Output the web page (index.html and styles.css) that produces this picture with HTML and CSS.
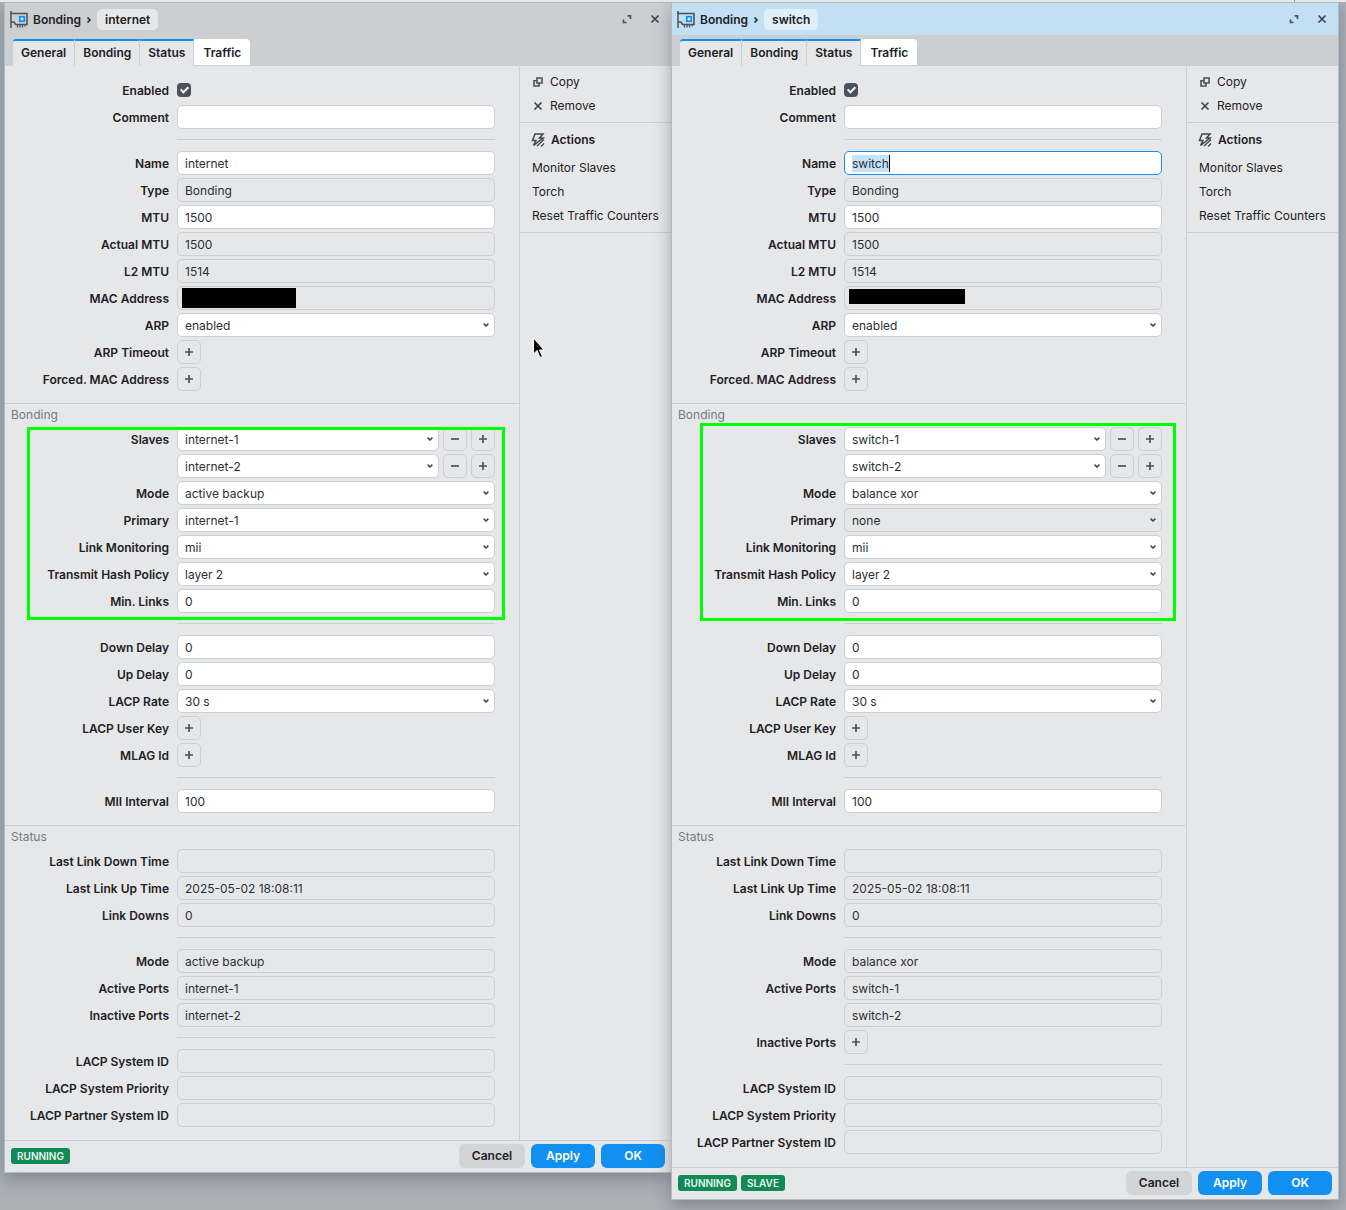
FILE: index.html
```html
<html lang="en">
<head>
  <meta charset="UTF-8">
  <meta name="viewport" content="width=device-width, initial-scale=1.0">
  <title>Bonding interfaces</title>
  <link rel="stylesheet" href="styles.css">
</head>
<body>
  <svg class="sprite" aria-hidden="true">
    <symbol id="icon-nic" viewBox="0 0 20 18">
      <path d="M1 1v17" stroke="#4a525c" stroke-width="1.5" fill="none"/>
      <path d="M0 3.500h17v11H5.500L4 12H1" stroke="#4a525c" stroke-width="1.6" fill="none"/>
      <path d="M7.500 14.500v3M10 14.500v3M12.500 14.500v3M15 14.500v2" stroke="#4a525c" stroke-width="1.3"/>
      <rect x="9.800" y="6.800" width="4.400" height="4.400" fill="#e6f3fd" stroke="#1290f1" stroke-width="1.800"/>
    </symbol>
    <symbol id="icon-expand" viewBox="0 0 10 10">
      <path d="M5.500 1.800h3V5M1.500 5.500v3h3" stroke="#4a525c" stroke-width="1.7" fill="none"/>
    </symbol>
    <symbol id="icon-close" viewBox="0 0 10 10">
      <path d="M1.500 1.500l7 7M8.500 1.500l-7 7" stroke="#3f4751" stroke-width="1.7"/>
    </symbol>
    <symbol id="icon-copy" viewBox="0 0 10 10">
      <path d="M4 1h5v5H4zM3.500 3.800H1V9h5V6.500" stroke="#4a525c" stroke-width="1.600" fill="none"/>
    </symbol>
    <symbol id="icon-actions" viewBox="0 0 14 14">
      <path d="M4 1h8L8.500 5H12L2.500 12.500l2.500-5H1.500z" stroke="#3f4751" stroke-width="1.500" fill="none"/>
      <path d="M13 6.500l-7 6.500M13 10.500L10 13.500" stroke="#3f4751" stroke-width="1.300"/>
    </symbol>
    <symbol id="icon-plus" viewBox="0 0 10 10">
      <path d="M5 1v8M1 5h8" stroke="#4a525c" stroke-width="1.700"/>
    </symbol>
    <symbol id="icon-minus" viewBox="0 0 10 10">
      <path d="M1 5h8" stroke="#4a525c" stroke-width="1.700"/>
    </symbol>
    <symbol id="icon-crumb" viewBox="0 0 6 8">
      <path d="M1.500 1.500L4 4 1.500 6.500" stroke="#1e2124" stroke-width="1.500" fill="none"/>
    </symbol>
    <symbol id="icon-down" viewBox="0 0 6 4">
      <path d="M0.600 0.600L3 3 5.400 0.600" stroke="#3f4751" stroke-width="1.500" fill="none"/>
    </symbol>
  </svg>

  <div class="topbar"><span></span></div>
  <main class="desktop" id="desktop"></main>

  <svg class="cursor" viewBox="0 0 14 22">
    <path d="M1.500 1v16l3.500-3.500L8 20.500l2.500-1L7.500 13h4.500z" fill="#000" stroke="#fff" stroke-width="1"/>
  </svg>

  <script src="script.js"></script>
</body>
</html>
```

FILE: styles.css
```css
* {
  box-sizing: border-box;
}

body {
  margin: 0;
  min-height: 100vh;
  background: #abb0b7;
  color: #1e2124;
  font-family: Inter, "Liberation Sans", sans-serif;
  font-size: 12px;
  line-height: 16px;
}

button, input, select {
  font: inherit;
  color: inherit;
}

button {
  padding: 0;
  border: 0;
  background: none;
}

.sprite {
  position: absolute;
  width: 0;
  height: 0;
}

.topbar {
  position: relative;
  z-index: 1;
  display: flex;
  justify-content: flex-end;
  height: 2px;
  background: #e6e7e9;
}

.topbar span {
  width: 52px;
  border-left: 1px solid #8f959b;
}

.desktop {
  display: flex;
  align-items: flex-start;
  padding: 0 7px 10px 4px;
}

/* window */
.window {
  flex: 1;
  min-width: 0;
  border: 1px solid #b4babf;
  background: #e6e7e9;
  box-shadow: 0 6px 16px rgba(60, 70, 80, 0.4);
}

.window + .window {
  position: relative;
  margin-left: -1px;
}

.titlebar {
  display: flex;
  align-items: center;
  height: 32px;
  padding: 0 10px 0 5px;
  background: #cccfd2;
  font-weight: 600;
}

.window.active .titlebar {
  background: #c3dff4;
}

.titlebar > span {
  padding-top: 2px;
}

.nic {
  width: 20px;
  height: 18px;
  margin-right: 3px;
}

.crumb {
  width: 6px;
  height: 8px;
  margin: 2px 5px 0;
}

.titlebar .name-chip {
  padding: 3px 8px 2px;
  border-radius: 5px;
  background: #e6e7e9;
}

.window.active .name-chip {
  background: #e1eff9;
}

.win-buttons {
  display: flex;
  gap: 16px;
  margin-left: auto;
}

.win-buttons button {
  display: flex;
  width: 12px;
  height: 12px;
  align-items: center;
  justify-content: center;
}

.win-buttons svg, .add svg {
  width: 10px;
  height: 10px;
}

.tabs {
  display: flex;
  height: 31px;
  padding: 4px 8px 0;
  background: #cccfd2;
}

.tabs button {
  padding: 0 8px 2px;
  border-top: 2px solid #1290f1;
  border-right: 1px solid #cccfd2;
  background: #e6e7e9;
  font-weight: 600;
}

.tabs button:first-child {
  border-top-left-radius: 3px;
}

.tabs button:last-child {
  margin-bottom: 1px;
  padding: 0 9px;
  border-top-color: #fff;
  border-right: 0;
  border-radius: 0 4px 0 0;
  background: #fff;
}

.content {
  display: flex;
}

.form {
  flex: 1;
  min-width: 0;
}

/* form sections */
.section {
  position: relative;
  padding: 0 24px 12px 0;
  border-bottom: 1px solid #cccfd2;
}

.section:first-child {
  padding-top: 12px;
}

.section:last-child {
  padding-bottom: 13px;
  border-bottom: 0;
}

.section h2 {
  margin: 0;
  padding: 3px 0 4px 6px;
  color: #737b83;
  font-size: 12px;
  font-weight: 400;
}

.rows {
  display: grid;
  gap: 3px;
}

.row {
  display: flex;
  align-items: center;
  gap: 8px;
  height: 24px;
}

.row label {
  width: 164px;
  padding-top: 2px;
  font-weight: 600;
  text-align: right;
  white-space: nowrap;
}

.control {
  position: relative;
  display: flex;
  flex: 1;
  gap: 4px;
  min-width: 0;
}

.rows hr {
  width: calc(100% - 172px);
  height: 1px;
  margin: 7px 0 8px 172px;
  border: 0;
  background: #cccfd2;
}

.field {
  flex: 1;
  min-width: 0;
  height: 24px;
  padding: 0 7px;
  border: 1px solid #cccfd2;
  border-radius: 5px;
  background-color: #fff;
  color: #2b3034;
  outline: none;
}

.field:read-only:not(select), .field:disabled {
  background-color: #e6e7e9;
  opacity: 1;
}

.field.focused {
  border-color: #1290f1;
}

.selection {
  position: absolute;
  top: 4px;
  left: 8px;
  height: 17px;
  padding-top: 1px;
  border-right: 1px solid #000;
  background: #c5e3fa;
  color: #2b3034;
}

select.field {
  appearance: none;
  padding-top: 2px;
}

.dropdown {
  position: relative;
  display: flex;
  flex: 1;
  min-width: 0;
}

.dropdown svg {
  position: absolute;
  top: 10px;
  right: 6px;
  width: 6px;
  height: 4px;
  pointer-events: none;
}

.check {
  appearance: none;
  width: 14px;
  height: 14px;
  margin: 0;
  border-radius: 4px;
  background: #4a525c;
}

.check::after {
  content: "";
  display: block;
  width: 3px;
  height: 6px;
  margin: 2px 0 0 5px;
  border: solid #fff;
  border-width: 0 2px 2px 0;
  transform: rotate(45deg);
}

.add {
  display: flex;
  width: 24px;
  height: 24px;
  align-items: center;
  justify-content: center;
  border: 1px solid #cccfd2;
  border-radius: 5px;
}

.redacted {
  position: absolute;
  top: 2px;
  left: 5px;
  width: 114px;
  height: 20px;
  background: #000;
}

.active .redacted {
  top: 3px;
  width: 116px;
  height: 15px;
}

.highlight {
  position: absolute;
  top: 23px;
  right: 14px;
  bottom: 205px;
  left: 22px;
  border: 3px solid #0f0;
  pointer-events: none;
}

.active .highlight {
  top: 19px;
  right: 10px;
  bottom: 204px;
  left: 28px;
}

/* sidebar */
.sidebar {
  width: 152px;
  border-left: 1px solid #cccfd2;
}

.group {
  display: flex;
  flex-direction: column;
  padding: 4px 0 4px 12px;
  border-bottom: 1px solid #cccfd2;
}

.group h3 {
  display: flex;
  align-items: center;
  gap: 6px;
  height: 26px;
  margin: 0 0 3px -1px;
  font-size: 12px;
  font-weight: 600;
}

.group h3 svg {
  width: 14px;
  height: 14px;
}

.group button {
  display: flex;
  align-items: center;
  gap: 6px;
  height: 24px;
  text-align: left;
  white-space: nowrap;
}

.group button svg {
  width: 12px;
  height: 10px;
}

/* footer */
.footer {
  display: flex;
  align-items: center;
  gap: 6px;
  padding: 3px 6px 4px;
  border-top: 1px solid #cccfd2;
}

.badges {
  display: flex;
  gap: 4px;
  margin-right: auto;
}

.badge {
  padding: 0 6px;
  border-radius: 3px;
  background: #118a56;
  color: #e6f5ee;
  font-size: 10px;
  font-weight: 600;
}

.btn {
  width: 64px;
  height: 24px;
  border-radius: 6px;
  background: #1290f1;
  color: #fff;
  font-weight: 600;
}

.btn.cancel {
  width: 66px;
  background: #d2d4d6;
  color: #1e2124;
}

.cursor {
  position: absolute;
  top: 337px;
  left: 532px;
  width: 14px;
  height: 22px;
}
```

FILE: script.js
```js
const windows = [
  {
    name: "internet",
    active: false,
    badges: ["RUNNING"],
    slaves: ["internet-1", "internet-2"],
    mode: "active backup",
    primary: "internet-1",
    activePorts: ["internet-1"],
    inactivePorts: ["internet-2"]
  },
  {
    name: "switch",
    active: true,
    badges: ["RUNNING", "SLAVE"],
    slaves: ["switch-1", "switch-2"],
    mode: "balance xor",
    primary: "none",
    activePorts: ["switch-1", "switch-2"],
    inactivePorts: []
  }
];

let nextId = 0;

function icon(name, className = "") {
  return `<svg class="${className}"><use href="#icon-${name}"/></svg>`;
}

// control is a function that gets the id for the label
function row(label, control) {
  const id = "field" + nextId++;
  return `<div class="row"><label for="${id}">${label}</label><div class="control">${control(id)}</div></div>`;
}

function input(value = "") {
  return id => `<input class="field" id="${id}" type="text" value="${value}">`;
}

function readonly(value = "") {
  return id => `<input class="field" id="${id}" type="text" value="${value}" readonly>`;
}

function select(value, disabled = false) {
  return id => `<span class="dropdown"><select class="field" id="${id}" ${disabled ? "disabled" : ""}><option>${value}</option></select>${icon("down")}</span>`;
}

function add() {
  return id => `<button class="add" id="${id}">${icon("plus")}</button>`;
}

function slave(value) {
  return id => select(value)(id) +
    `<button class="add" aria-label="Remove">${icon("minus")}</button>` +
    `<button class="add" aria-label="Add">${icon("plus")}</button>`;
}

function nameField(win) {
  if (!win.active) return input(win.name);
  return id => `<input class="field focused" id="${id}" type="text" value=""><span class="selection">${win.name}</span>`;
}

function ports(label, list) {
  if (!list.length) return row(label, add());
  return list.map((port, i) => row(i ? "" : label, readonly(port))).join("");
}

function renderWindow(win) {
  return `
  <section class="window ${win.active ? "active" : ""}">
    <header class="titlebar">
      ${icon("nic", "nic")}
      <span>Bonding</span>
      ${icon("crumb", "crumb")}
      <span class="name-chip">${win.name}</span>
      <div class="win-buttons">
        <button aria-label="Maximize">${icon("expand")}</button>
        <button aria-label="Close">${icon("close")}</button>
      </div>
    </header>
    <nav class="tabs">
      <button>General</button><button>Bonding</button><button>Status</button><button>Traffic</button>
    </nav>
    <div class="content">
      <div class="form">
        <div class="section">
          <div class="rows">
            ${row("Enabled", id => `<input class="check" id="${id}" type="checkbox" checked>`)}
            ${row("Comment", input())}
            <hr>
            ${row("Name", nameField(win))}
            ${row("Type", readonly("Bonding"))}
            ${row("MTU", input("1500"))}
            ${row("Actual MTU", readonly("1500"))}
            ${row("L2 MTU", readonly("1514"))}
            ${row("MAC Address", id => readonly()(id) + '<span class="redacted"></span>')}
            ${row("ARP", select("enabled"))}
            ${row("ARP Timeout", add())}
            ${row("Forced. MAC Address", add())}
          </div>
        </div>
        <div class="section">
          <h2>Bonding</h2>
          <div class="rows">
            ${win.slaves.map((s, i) => row(i ? "" : "Slaves", slave(s))).join("")}
            ${row("Mode", select(win.mode))}
            ${row("Primary", select(win.primary, win.primary === "none"))}
            ${row("Link Monitoring", select("mii"))}
            ${row("Transmit Hash Policy", select("layer 2"))}
            ${row("Min. Links", input("0"))}
            <hr>
            ${row("Down Delay", input("0"))}
            ${row("Up Delay", input("0"))}
            ${row("LACP Rate", select("30 s"))}
            ${row("LACP User Key", add())}
            ${row("MLAG Id", add())}
            <hr>
            ${row("MII Interval", input("100"))}
          </div>
          <div class="highlight"></div>
        </div>
        <div class="section">
          <h2>Status</h2>
          <div class="rows">
            ${row("Last Link Down Time", readonly())}
            ${row("Last Link Up Time", readonly("2025-05-02 18:08:11"))}
            ${row("Link Downs", readonly("0"))}
            <hr>
            ${row("Mode", readonly(win.mode))}
            ${ports("Active Ports", win.activePorts)}
            ${ports("Inactive Ports", win.inactivePorts)}
            <hr>
            ${row("LACP System ID", readonly())}
            ${row("LACP System Priority", readonly())}
            ${row("LACP Partner System ID", readonly())}
          </div>
        </div>
      </div>
      <aside class="sidebar">
        <div class="group">
          <button>${icon("copy")}Copy</button>
          <button>${icon("close")}Remove</button>
        </div>
        <div class="group">
          <h3>${icon("actions")}Actions</h3>
          <button>Monitor Slaves</button>
          <button>Torch</button>
          <button>Reset Traffic Counters</button>
        </div>
      </aside>
    </div>
    <footer class="footer">
      <div class="badges">${win.badges.map(b => `<span class="badge">${b}</span>`).join("")}</div>
      <button class="btn cancel">Cancel</button>
      <button class="btn">Apply</button>
      <button class="btn">OK</button>
    </footer>
  </section>`;
}

document.getElementById("desktop").innerHTML = windows.map(renderWindow).join("");
```
